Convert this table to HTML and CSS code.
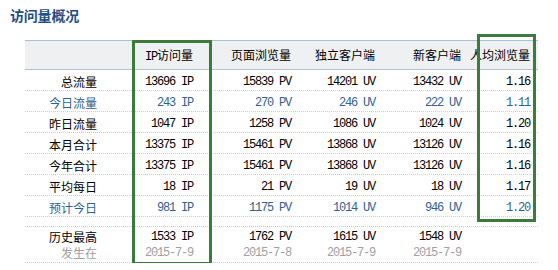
FILE: index.html
```html
<!DOCTYPE html>
<html lang="zh-CN">
<head>
<meta charset="utf-8">
<title>访问量概况</title>
<link rel="stylesheet" href="styles.css">
</head>
<body>
<h2 class="title">访问量概况</h2>
<div class="stats">
  <div class="row head">
    <div class="c"></div>
    <div class="c"><span class="m">IP</span>访问量</div>
    <div class="c">页面浏览量</div>
    <div class="c">独立客户端</div>
    <div class="c">新客户端</div>
    <div class="c">人均浏览量</div>
  </div>
  <div class="row">
    <div class="c">总流量</div>
    <div class="c m">13696 IP</div>
    <div class="c m">15839 PV</div>
    <div class="c m">14201 UV</div>
    <div class="c m">13432 UV</div>
    <div class="c m">1.16</div>
  </div>
  <div class="row blue">
    <div class="c">今日流量</div>
    <div class="c m">243 IP</div>
    <div class="c m">270 PV</div>
    <div class="c m">246 UV</div>
    <div class="c m">222 UV</div>
    <div class="c m">1.11</div>
  </div>
  <div class="row">
    <div class="c">昨日流量</div>
    <div class="c m">1047 IP</div>
    <div class="c m">1258 PV</div>
    <div class="c m">1086 UV</div>
    <div class="c m">1024 UV</div>
    <div class="c m">1.20</div>
  </div>
  <div class="row">
    <div class="c">本月合计</div>
    <div class="c m">13375 IP</div>
    <div class="c m">15461 PV</div>
    <div class="c m">13868 UV</div>
    <div class="c m">13126 UV</div>
    <div class="c m">1.16</div>
  </div>
  <div class="row">
    <div class="c">今年合计</div>
    <div class="c m">13375 IP</div>
    <div class="c m">15461 PV</div>
    <div class="c m">13868 UV</div>
    <div class="c m">13126 UV</div>
    <div class="c m">1.16</div>
  </div>
  <div class="row">
    <div class="c">平均每日</div>
    <div class="c m">18 IP</div>
    <div class="c m">21 PV</div>
    <div class="c m">19 UV</div>
    <div class="c m">18 UV</div>
    <div class="c m">1.17</div>
  </div>
  <div class="row blue">
    <div class="c">预计今日</div>
    <div class="c m">981 IP</div>
    <div class="c m">1175 PV</div>
    <div class="c m">1014 UV</div>
    <div class="c m">946 UV</div>
    <div class="c m">1.20</div>
  </div>
  <div class="row gap"></div>
  <div class="row peak">
    <div class="c"><span>历史最高</span><span class="sub">发生在</span></div>
    <div class="c"><span class="m">1533 IP</span><span class="sub m">2015-7-9</span></div>
    <div class="c"><span class="m">1762 PV</span><span class="sub m">2015-7-8</span></div>
    <div class="c"><span class="m">1615 UV</span><span class="sub m">2015-7-9</span></div>
    <div class="c"><span class="m">1548 UV</span><span class="sub m">2015-7-9</span></div>
    <div class="c"></div>
  </div>
  <div class="mark mark-ip"></div>
  <div class="mark mark-avg"></div>
</div>
</body>
</html>
```

FILE: styles.css
```css
html, body {
  margin: 0;
  padding: 0;
  background: #ffffff;
}

body {
  font-family: "Noto Sans CJK SC", "Liberation Sans", sans-serif;
  font-size: 12px;
  color: #000000;
}

.title {
  margin: 0;
  padding: 7px 0 0 10px;
  font-size: 14px;
  line-height: 16px;
  font-weight: bold;
  color: #1f4f8a;
  letter-spacing: -0.2px;
}

.stats {
  position: relative;
  margin: 17px 0 0 25px;
  width: 513px;
}

.row {
  display: grid;
  grid-template-columns: 78px 96px 98px 84px 86px 71px;
  height: 20px;
  border-bottom: 1px dotted #cdcdcd;
}

.c {
  text-align: right;
  padding-right: 6px;
  line-height: 20px;
  padding-top: 2px;
  white-space: nowrap;
}

.c:last-child {
  padding-right: 8px;
}

.m {
  font-family: "Liberation Mono", "Noto Sans CJK SC", monospace;
  letter-spacing: -1.2px;
}

.head {
  height: 28px;
  background: #eff0f2;
  border-top: 1px solid #a9c0d9;
  border-bottom: 1px solid #b7c3d0;
}

.head .c {
  line-height: 28px;
  padding-top: 0;
}

.blue {
  color: #2f5f95;
}

.gap {
  height: 9px;
}

.peak {
  height: 35px;
}

.peak .c {
  line-height: 16px;
  padding-top: 2px;
}

.peak .c > span {
  display: block;
}

.sub {
  display: block;
  color: #a0a0a0;
}

.mark {
  position: absolute;
  box-sizing: border-box;
  border: 3px solid #3b7b3b;
}

.mark-ip {
  left: 107px;
  top: 0;
  width: 80px;
  height: 225px;
}

.mark-avg {
  left: 452px;
  top: -6px;
  width: 59px;
  height: 188px;
}
```
